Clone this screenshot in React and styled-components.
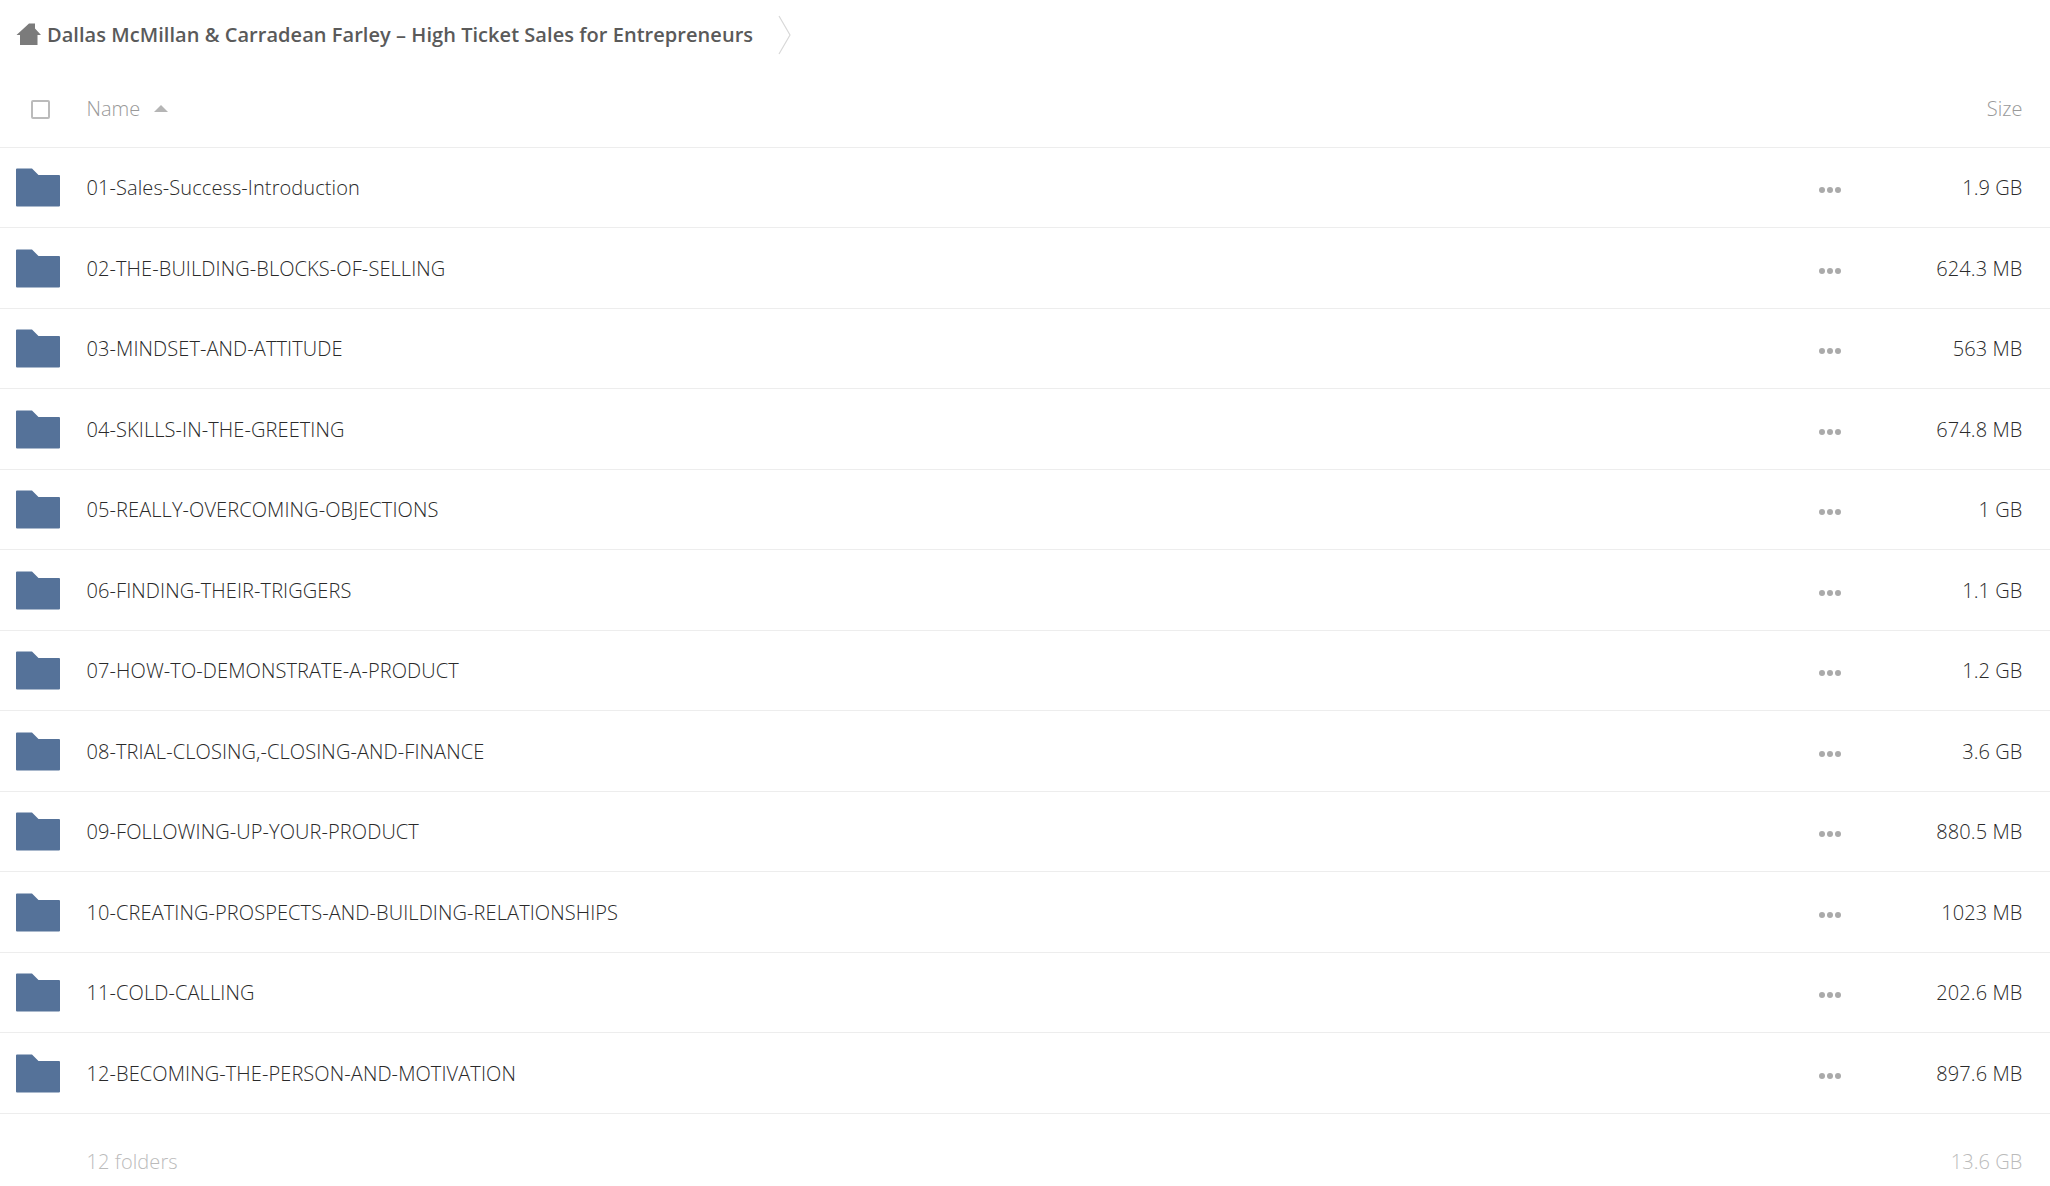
import React from "react";
import styled, { createGlobalStyle } from "styled-components";

const GlobalStyle = createGlobalStyle`
  html, body {
    margin: 0;
    padding: 0;
    background: #fff;
    font-family: "Open Sans", "Liberation Sans", sans-serif;
  }
`;

const Page = styled.div`
  width: 2050px;
  height: 1186px;
  overflow: hidden;
  background: #fff;
`;

const Breadcrumb = styled.div`
  display: flex;
  align-items: center;
  height: 69px;
  padding-left: 16px;
`;

const CrumbTitle = styled.span`
  margin-left: 6px;
  font-size: 20px;
  font-weight: 600;
  letter-spacing: 0.045px;
  color: #5a5a5a;
  white-space: nowrap;
`;

const CrumbArrow = styled.svg`
  margin-left: 25px;
  flex: none;
`;

const HeaderRow = styled.div`
  display: flex;
  align-items: center;
  height: 79px;
  border-bottom: 1px solid #ededed;
  box-sizing: border-box;
  padding-right: 27.5px;
  font-size: 20px;
  font-weight: 300;
  color: #999;
`;

const CheckBox = styled.span`
  flex: none;
  width: 19px;
  height: 19px;
  margin-top: 2px;
  margin-left: 31px;
  margin-right: 36.5px;
  box-sizing: border-box;
  border: 2px solid #bbb;
  border-radius: 2px;
`;

const SortCaret = styled.span`
  margin-left: 14px;
  width: 0;
  height: 0;
  border-left: 7px solid transparent;
  border-right: 7px solid transparent;
  border-bottom: 7px solid #b5b5b5;
`;

const Spacer = styled.span`
  flex: 1;
`;

const Rows = styled.div`
  margin-top: -0.5px;
`;

const Row = styled.div`
  display: flex;
  align-items: center;
  height: 80.5px;
  box-sizing: border-box;
  border-bottom: 1px solid #ededed;
  padding-top: 0.6px;
  padding-left: 16px;
  padding-right: 27.5px;
  font-size: 20px;
  font-weight: 300;
  letter-spacing: 0.09px;
  color: #2a2a2a;
`;

const FolderIcon = styled.svg`
  flex: none;
  margin-right: 26.5px;
`;

const Name = styled.span`
  flex: 1;
  white-space: nowrap;
`;

const Dots = styled.span`
  display: flex;
  gap: 2px;
  margin-top: 5px;
  margin-right: 1px;
`;

const Dot = styled.i`
  width: 6px;
  height: 6px;
  border-radius: 50%;
  background: #aaa;
`;

const Size = styled.span`
  width: 180.5px;
  text-align: right;
  white-space: nowrap;
`;

const SummaryRow = styled.div`
  display: flex;
  align-items: center;
  height: 95px;
  padding-left: 86.5px;
  padding-right: 27.5px;
  font-size: 20px;
  font-weight: 300;
  letter-spacing: 0.09px;
  color: #bbb;
`;

const folders = [
  ["01-Sales-Success-Introduction", "1.9 GB"],
  ["02-THE-BUILDING-BLOCKS-OF-SELLING", "624.3 MB"],
  ["03-MINDSET-AND-ATTITUDE", "563 MB"],
  ["04-SKILLS-IN-THE-GREETING", "674.8 MB"],
  ["05-REALLY-OVERCOMING-OBJECTIONS", "1 GB"],
  ["06-FINDING-THEIR-TRIGGERS", "1.1 GB"],
  ["07-HOW-TO-DEMONSTRATE-A-PRODUCT", "1.2 GB"],
  ["08-TRIAL-CLOSING,-CLOSING-AND-FINANCE", "3.6 GB"],
  ["09-FOLLOWING-UP-YOUR-PRODUCT", "880.5 MB"],
  ["10-CREATING-PROSPECTS-AND-BUILDING-RELATIONSHIPS", "1023 MB"],
  ["11-COLD-CALLING", "202.6 MB"],
  ["12-BECOMING-THE-PERSON-AND-MOTIVATION", "897.6 MB"],
];

const Folder = () => (
  <FolderIcon width="44" height="39" viewBox="0 0 44 39">
    <path
      d="M1 0.5H16L22.5 7H43a1 1 0 0 1 1 1V37.5a1 1 0 0 1-1 1H1a1 1 0 0 1-1-1V1.5a1 1 0 0 1 1-1Z"
      fill="#557299"
    />
  </FolderIcon>
);

const App = () => {
  return (
    <Page>
      <GlobalStyle />
      <Breadcrumb>
        <svg width="25" height="23" viewBox="0 0 25 23">
          <path
            d="M0.5 12L13 0.5H19V5.5L25 12H21.5V22H4V12Z"
            fill="#7b7b7b"
          />
        </svg>
        <CrumbTitle>Dallas McMillan &amp; Carradean Farley – High Ticket Sales for Entrepreneurs</CrumbTitle>
        <CrumbArrow width="13" height="40" viewBox="0 0 13 40">
          <path d="M1 1L12 20L1 39" fill="none" stroke="#d8d8d8" strokeWidth="1.2" />
        </CrumbArrow>
      </Breadcrumb>
      <HeaderRow>
        <CheckBox />
        <span>Name</span>
        <SortCaret />
        <Spacer />
        <span>Size</span>
      </HeaderRow>
      <Rows>
        {folders.map(([name, size]) => (
          <Row key={name}>
            <Folder />
            <Name>{name}</Name>
            <Dots>
              <Dot />
              <Dot />
              <Dot />
            </Dots>
            <Size>{size}</Size>
          </Row>
        ))}
      </Rows>
      <SummaryRow>
        <span>12 folders</span>
        <Spacer />
        <span>13.6 GB</span>
      </SummaryRow>
    </Page>
  );
};

export default App;
